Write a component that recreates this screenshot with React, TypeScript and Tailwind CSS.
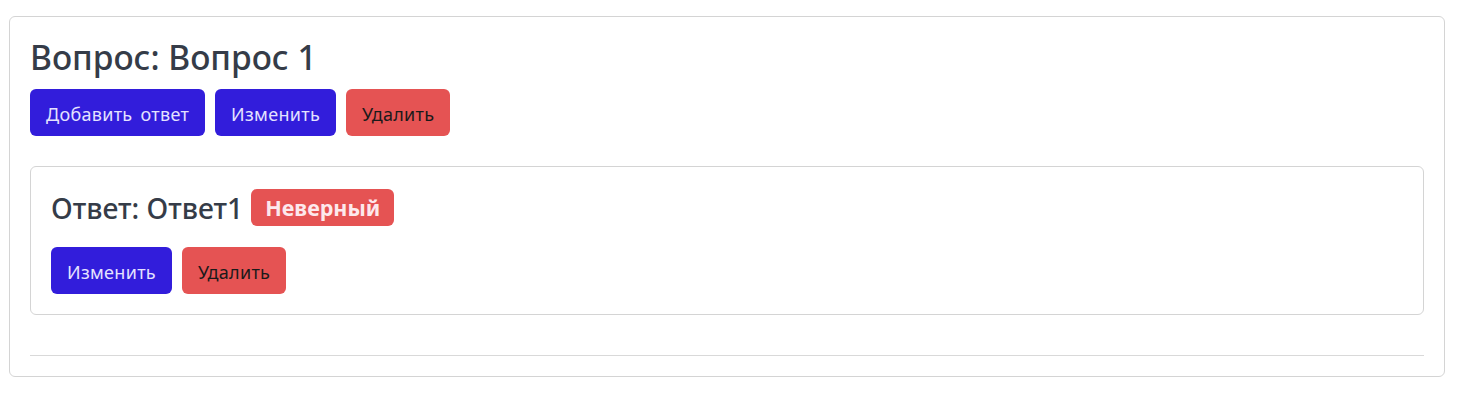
export default function App() {
  const font = { fontFamily: '"Noto Sans", "Open Sans", sans-serif' };
  const btn = "h-[47px] rounded-md px-4 pt-1 text-[18px] tracking-[0.3px]";
  const blue = "bg-[#321ddb] text-[#e4e2ff]";
  const red = "bg-[#e55353] text-[#1a1a1a]";
  return (
    <div className="pt-4 pl-[9px]" style={font}>
      <div className="w-[1436px] rounded-md border border-[#d4d4d4] bg-white p-5">
        <h2 className="mb-[12px] text-[33.5px] leading-[40px] font-medium text-[#353c48]">
          Вопрос: Вопрос 1
        </h2>
        <div className="flex gap-[10px]">
          <button className={`${btn} ${blue} [word-spacing:3px]`}>Добавить ответ</button>
          <button className={`${btn} ${blue}`}>Изменить</button>
          <button className={`${btn} ${red}`}>Удалить</button>
        </div>

        <div className="mt-[30px] rounded-md border border-[#d4d4d4] p-5">
          <div className="flex h-[41px] items-center gap-2">
            <h3 className="pt-[2px] text-[28.3px] font-medium text-[#353c48]">Ответ: Ответ1</h3>
            <span className="flex h-[37px] items-center rounded-md bg-[#e55353] px-[14px] pt-[2px] text-[21.5px] font-bold text-[#fde8ec]">
              Неверный
            </span>
          </div>
          <div className="mt-[19px] flex gap-[10px]">
            <button className={`${btn} ${blue}`}>Изменить</button>
            <button className={`${btn} ${red}`}>Удалить</button>
          </div>
        </div>

        <hr className="mt-10 border-t border-[#d9d9d9]" />
      </div>
    </div>
  );
}
